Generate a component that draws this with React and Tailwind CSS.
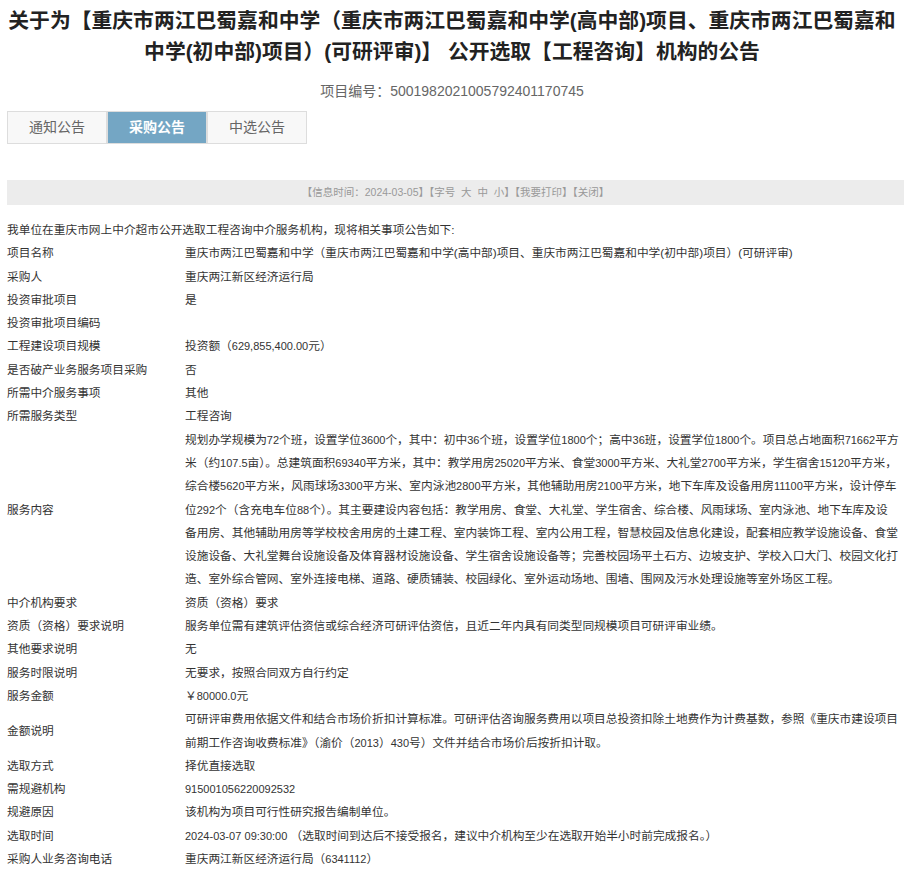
import React from "react";

const rows = [
  ["项目名称", "重庆市两江巴蜀嘉和中学（重庆市两江巴蜀嘉和中学(高中部)项目、重庆市两江巴蜀嘉和中学(初中部)项目）(可研评审)"],
  ["采购人", "重庆两江新区经济运行局"],
  ["投资审批项目", "是"],
  ["投资审批项目编码", ""],
  ["工程建设项目规模", "投资额（629,855,400.00元）"],
  ["是否破产业务服务项目采购", "否"],
  ["所需中介服务事项", "其他"],
  ["所需服务类型", "工程咨询"],
  [
    "服务内容",
    [
      "规划办学规模为72个班，设置学位3600个，其中：初中36个班，设置学位1800个；高中36班，设置学位1800个。项目总占地面积71662平方",
      "米（约107.5亩）。总建筑面积69340平方米，其中：教学用房25020平方米、食堂3000平方米、大礼堂2700平方米，学生宿舍15120平方米，",
      "综合楼5620平方米，风雨球场3300平方米、室内泳池2800平方米，其他辅助用房2100平方米，地下车库及设备用房11100平方米，设计停车",
      "位292个（含充电车位88个）。其主要建设内容包括：教学用房、食堂、大礼堂、学生宿舍、综合楼、风雨球场、室内泳池、地下车库及设",
      "备用房、其他辅助用房等学校校舍用房的土建工程、室内装饰工程、室内公用工程，智慧校园及信息化建设，配套相应教学设施设备、食堂",
      "设施设备、大礼堂舞台设施设备及体育器材设施设备、学生宿舍设施设备等；完善校园场平土石方、边坡支护、学校入口大门、校园文化打",
      "造、室外综合管网、室外连接电梯、道路、硬质铺装、校园绿化、室外运动场地、围墙、围网及污水处理设施等室外场区工程。",
    ],
  ],
  ["中介机构要求", "资质（资格）要求"],
  ["资质（资格）要求说明", "服务单位需有建筑评估资信或综合经济可研评估资信，且近二年内具有同类型同规模项目可研评审业绩。"],
  ["其他要求说明", "无"],
  ["服务时限说明", "无要求，按照合同双方自行约定"],
  ["服务金额", "￥80000.0元"],
  [
    "金额说明",
    [
      "可研评审费用依据文件和结合市场价折扣计算标准。可研评估咨询服务费用以项目总投资扣除土地费作为计费基数，参照《重庆市建设项目",
      "前期工作咨询收费标准》（渝价（2013）430号）文件并结合市场价后按折扣计取。",
    ],
  ],
  ["选取方式", "择优直接选取"],
  ["需规避机构", "915001056220092532"],
  ["规避原因", "该机构为项目可行性研究报告编制单位。"],
  ["选取时间", "2024-03-07 09:30:00 （选取时间到达后不接受报名，建议中介机构至少在选取开始半小时前完成报名。）"],
  ["采购人业务咨询电话", "重庆两江新区经济运行局（6341112）"],
];

const tabs = ["通知公告", "采购公告", "中选公告"];

// digits render a bit smaller, like in the original page
const Txt = ({ s }) =>
  s.split(/(\d[\d,.:\-]*)/).map((part, i) =>
    /^\d/.test(part) ? (
      <span key={i} className="text-[11px] leading-none">
        {part}
      </span>
    ) : (
      part
    )
  );

export default function App() {
  return (
    <div
      className="w-[904px] bg-white text-[#333]"
      style={{ fontFamily: '"Liberation Sans", "Noto Sans CJK SC", sans-serif' }}
    >
      <h1 className="px-[4px] pt-[5px] text-center text-[20.8px] leading-[31px] font-bold text-[#222]">
        关于为【重庆市两江巴蜀嘉和中学（重庆市两江巴蜀嘉和中学(高中部)项目、重庆市两江巴蜀嘉和中学(初中部)项目）(可研评审)】 公开选取【工程咨询】机构的公告
      </h1>
      <p className="mt-[14px] text-center text-[14px] leading-[20px] text-[#666]">
        项目编号：5001982021005792401170745
      </p>
      <div className="mt-[10px] ml-[7px] flex">
        {tabs.map((t, i) => (
          <div
            key={t}
            className={
              i === 1
                ? "flex h-[33px] w-[100px] items-center justify-center border border-[#ddd] bg-[#74a6c4] text-[14px] font-bold text-white"
                : "flex h-[33px] w-[100px] items-center justify-center border border-[#ddd] bg-[#f8f8f8] text-[14px] text-[#666]"
            }
          >
            {t}
          </div>
        ))}
      </div>
      <div className="mt-[36px] ml-[7px] flex h-[25px] items-center justify-center bg-[#ececec] text-[10.5px] text-[#999]">
        【信息时间：2024-03-05】【字号&nbsp;&nbsp;大&nbsp;&nbsp;中&nbsp;&nbsp;小】【我要打印】【关闭】
      </div>
      <div className="mt-[13px] pl-[7px] text-[11.7px] leading-[23.3px]">
        <p>我单位在重庆市网上中介超市公开选取工程咨询中介服务机构，现将相关事项公告如下:</p>
        <table className="w-[897px]">
          <tbody>
            {rows.map(([k, v]) => (
              <tr key={k}>
                <td className="w-[178px] p-0 align-middle">{k}</td>
                <td className="p-0">
                  {Array.isArray(v)
                    ? v.map((line) => (
                        <div key={line} className="whitespace-nowrap">
                          <Txt s={line} />
                        </div>
                      ))
                    : <Txt s={v} />}
                </td>
              </tr>
            ))}
          </tbody>
        </table>
      </div>
    </div>
  );
}
